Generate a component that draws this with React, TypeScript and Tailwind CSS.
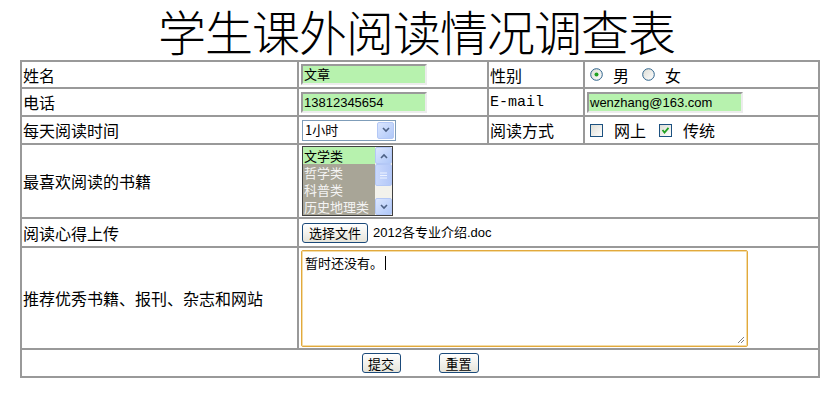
import React from 'react';

const cell = 'border border-[#999] p-px align-middle';
const cjk = "font-['Noto_Sans_CJK_SC',sans-serif]";
const ui = "font-['Liberation_Sans','Noto_Sans_CJK_SC',sans-serif]";

function TextBox({ value, width }: { value: string; width: string }) {
  return (
    <div
      className={`${width} h-[21px] border-t-2 border-l-2 border-b-2 border-r-2 border-t-[#9a9a9a] border-l-[#9a9a9a] border-b-[#ececec] border-r-[#ececec] bg-[#b7f2ae] px-[1px] text-[13px] leading-[17px] text-black ${ui}`}
    >
      {value}
    </div>
  );
}

function Radio({ checked }: { checked?: boolean }) {
  return (
    <svg width="13" height="13" viewBox="0 0 13 13">
      <defs>
        <linearGradient id="rg" x1="0" y1="0" x2="1" y2="1">
          <stop offset="0" stopColor="#dcdcd4" />
          <stop offset="1" stopColor="#ffffff" />
        </linearGradient>
      </defs>
      <circle cx="6.5" cy="6.5" r="5.8" fill="url(#rg)" stroke="#2c628b" strokeWidth="1" />
      {checked && <circle cx="6.5" cy="6.5" r="2" fill="#21a121" />}
    </svg>
  );
}

function Check({ checked }: { checked?: boolean }) {
  return (
    <svg width="13" height="13" viewBox="0 0 13 13">
      <defs>
        <linearGradient id="cg" x1="0" y1="0" x2="1" y2="1">
          <stop offset="0" stopColor="#dcdcd4" />
          <stop offset="1" stopColor="#ffffff" />
        </linearGradient>
      </defs>
      <rect x="0.5" y="0.5" width="12" height="12" fill="url(#cg)" stroke="#1c5180" />
      {checked && <path d="M3.5 6 L5.5 8.5 L9.5 3.8" fill="none" stroke="#21a121" strokeWidth="1.8" />}
    </svg>
  );
}

function ScrollBtn({ up }: { up?: boolean }) {
  return (
    <div className="flex h-[17px] w-[17px] items-center justify-center rounded-[2px] border border-[#b4c8f6] bg-gradient-to-br from-[#dbe6ff] to-[#b0c8f8]">
      <svg width="8" height="6" viewBox="0 0 8 6">
        <path d={up ? 'M1 5 L4 2 L7 5' : 'M1 1 L4 4 L7 1'} fill="none" stroke="#4d6185" strokeWidth="1.6" />
      </svg>
    </div>
  );
}

function XpButton({ children, className = '' }: { children: React.ReactNode; className?: string }) {
  return (
    <div
      className={`inline-flex h-[20px] items-center justify-center rounded-[3px] border border-[#1b4a7a] bg-gradient-to-b from-[#ffffff] to-[#e6e4da] text-[13px] leading-none text-black ${cjk} ${className}`}
    >
      {children}
    </div>
  );
}

export default function App() {
  return (
    <div className={`h-[399px] w-[833px] bg-white text-black ${cjk}`}>
      <div className="h-[60px] text-center text-[48px] font-light leading-[60px] tracking-[-1px]">
        学生课外阅读情况调查表
      </div>
      <table className="ml-[20px] w-[800px] table-fixed border-separate border-spacing-0 border border-[#999] text-[16px] leading-[18px]">
        <colgroup>
          <col className="w-[277px]" />
          <col className="w-[190px]" />
          <col className="w-[96px]" />
          <col className="w-[235px]" />
        </colgroup>
        <tbody>
          <tr>
            <td className={`${cell} h-[27px]`}>姓名</td>
            <td className={`${cell} pl-[2px]`}>
              <TextBox value="文章" width="w-[126px]" />
            </td>
            <td className={cell}>性别</td>
            <td className={cell}>
              <div className="flex items-center">
                <span className="ml-[4px] flex"><Radio checked /></span>
                <span className="ml-[10px]">男</span>
                <span className="ml-[13px] flex"><Radio /></span>
                <span className="ml-[10px]">女</span>
              </div>
            </td>
          </tr>
          <tr>
            <td className={`${cell} h-[28px]`}>电话</td>
            <td className={`${cell} pl-[2px]`}>
              <TextBox value="13812345654" width="w-[126px]" />
            </td>
            <td className={`${cell} pt-[3px] font-['Liberation_Mono',monospace] text-[15px]`}>E-mail</td>
            <td className={`${cell} pl-[2px]`}>
              <TextBox value="wenzhang@163.com" width="w-[156px]" />
            </td>
          </tr>
          <tr>
            <td className={`${cell} h-[28px]`}>每天阅读时间</td>
            <td className={`${cell} pl-[3px]`}>
              <div className="flex h-[21px] w-[94px] items-center justify-between border border-[#7f9db9] bg-white pl-[2px] pr-[1px] text-[13px]">
                <span>1小时</span>
                <ScrollBtn />
              </div>
            </td>
            <td className={cell}>阅读方式</td>
            <td className={cell}>
              <div className="flex items-center">
                <span className="ml-[4px] flex"><Check /></span>
                <span className="ml-[11px]">网上</span>
                <span className="ml-[13px] flex"><Check checked /></span>
                <span className="ml-[11px]">传统</span>
              </div>
            </td>
          </tr>
          <tr>
            <td className={`${cell} h-[73px]`}>最喜欢阅读的书籍</td>
            <td className={`${cell} pl-[3px]`} colSpan={3}>
              <div className="flex h-[70px] w-[91px] border border-[#404040] bg-[#a8a597] text-[13px] leading-[17px]">
                <div className="flex-1">
                  <div className="h-[17px] overflow-hidden bg-[#b7f2ae] pl-[1px] text-black">文学类</div>
                  <div className="h-[17px] overflow-hidden pl-[1px] text-[#f4f4f4]">哲学类</div>
                  <div className="h-[17px] overflow-hidden pl-[1px] text-[#f4f4f4]">科普类</div>
                  <div className="h-[17px] overflow-hidden whitespace-nowrap pl-[1px] text-[#f4f4f4]">历史地理类</div>
                </div>
                <div className="flex w-[17px] flex-col justify-between bg-[#f3f2ec]">
                  <ScrollBtn up />
                  <div className="flex h-[22px] items-center justify-center rounded-[2px] border border-[#b4c8f6] bg-gradient-to-r from-[#c9d8fc] to-[#b4c8f8]">
                    <svg width="7" height="7" viewBox="0 0 7 7">
                      <path d="M0 1h7M0 3.5h7M0 6h7" stroke="#eef3ff" strokeWidth="1" />
                    </svg>
                  </div>
                  <div className="flex-1" />
                  <ScrollBtn />
                </div>
              </div>
            </td>
          </tr>
          <tr>
            <td className={`${cell} h-[29px]`}>阅读心得上传</td>
            <td className={`${cell} pl-[3px]`} colSpan={3}>
              <div className="flex items-center">
                <XpButton className="w-[66px]">选择文件</XpButton>
                <span className={`ml-[5px] text-[13px] ${ui}`}>2012各专业介绍.doc</span>
              </div>
            </td>
          </tr>
          <tr>
            <td className={`${cell} h-[102px]`}>推荐优秀书籍、报刊、杂志和网站</td>
            <td className={`${cell} pl-[2px]`} colSpan={3}>
              <div className="relative h-[97px] w-[447px] rounded-[2px] border border-[#e2a93c] bg-white px-[3px] pt-[3px] text-[13px] leading-[16px] shadow-[inset_0_0_0_1px_#f3dca8]">
                <span>暂时还没有。</span>
                <span className="ml-[2px] inline-block h-[14px] w-px translate-y-[2px] bg-black" />
                <svg className="absolute bottom-[2px] right-[2px]" width="9" height="9" viewBox="0 0 9 9">
                  <path d="M8 2 L2 8 M8 5 L5 8" stroke="#808080" strokeWidth="1" />
                </svg>
              </div>
            </td>
          </tr>
          <tr>
            <td className={`${cell} h-[28px] text-center`} colSpan={4}>
              <div className="flex items-center justify-center gap-[38px]">
                <XpButton className="w-[39px]">提交</XpButton>
                <XpButton className="w-[40px]">重置</XpButton>
              </div>
            </td>
          </tr>
        </tbody>
      </table>
    </div>
  );
}
